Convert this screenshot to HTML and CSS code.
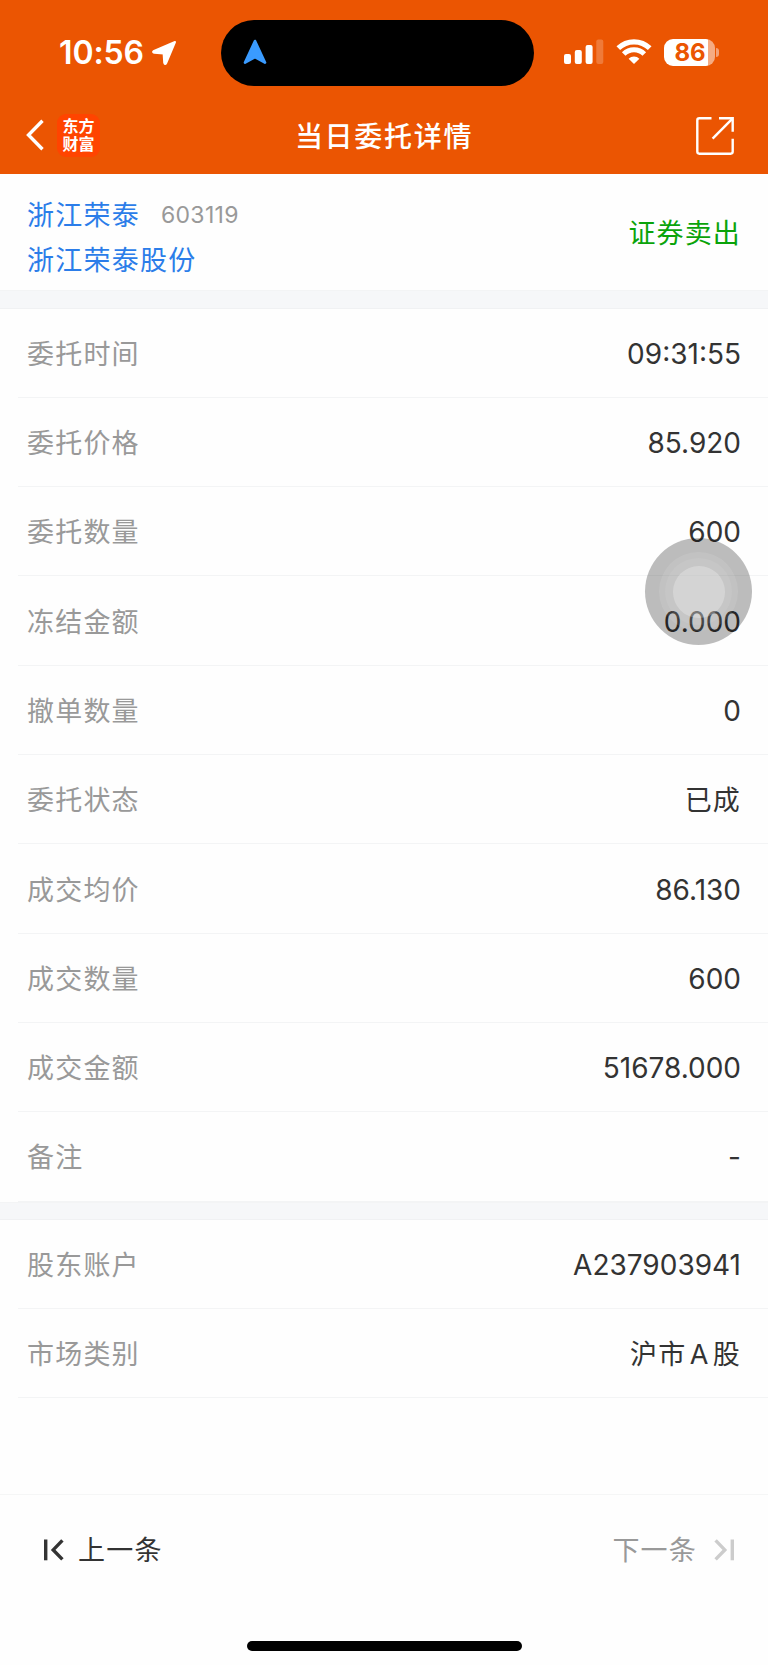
FILE: index.html
```html
<!DOCTYPE html>
<html lang="zh-CN">
<head>
    <meta charset="UTF-8">
    <meta name="viewport" content="width=device-width, initial-scale=1.0">
    <title>当日委托详情</title>
    <link rel="stylesheet" href="styles.css">
</head>
<body>
    <header class="header">
        <div class="status-bar">
            <div class="status-left">
                <span class="time">10:56</span>
                <svg class="location" width="26" height="26" viewBox="0 0 26 26">
                    <path d="M24 2 L15.2 23 Q14 25.2 13.2 22.6 L12.6 13.4 L3.2 12.8 Q1 12 3 10.8 Z" fill="#fff" stroke="#fff" stroke-width="2" stroke-linejoin="round"/>
                </svg>
            </div>
            <div class="island">
                <svg width="24" height="26" viewBox="0 0 24 26">
                    <path d="M12 2 L22 23.6 L12 18 L2 23.6 Z" fill="#3a9bff" stroke="#3a9bff" stroke-width="2.6" stroke-linejoin="round"/>
                </svg>
            </div>
            <div class="status-right">
                <svg class="signal" width="40" height="26" viewBox="0 0 40 26" fill="#fff">
                    <rect x="0" y="15" width="7" height="10" rx="2"/>
                    <rect x="10.8" y="11" width="7" height="14" rx="2"/>
                    <rect x="21.6" y="6" width="7" height="19" rx="2"/>
                    <rect x="32.3" y="0.5" width="7" height="24.5" rx="2" opacity="0.22"/>
                </svg>
                <svg class="wifi" width="36" height="26" viewBox="0 0 36 26" fill="none" stroke="#fff">
                    <path d="M2.3 9.2 A22.4 22.4 0 0 1 33.7 9.2" stroke-width="5.2"/>
                    <path d="M7.7 15 A14.4 14.4 0 0 1 28.3 15" stroke-width="5"/>
                    <path d="M18 25 L12.6 19.8 A7.6 7.6 0 0 1 23.4 19.8 Z" fill="#fff" stroke="none"/>
                </svg>
                <div class="battery"><span>86</span></div>
                <div class="battery-tip"></div>
            </div>
        </div>
        <nav class="nav">
            <div class="nav-left">
                <svg width="18" height="32" viewBox="0 0 18 32">
                    <path d="M16.5 1.8 L2.5 16 L16.5 30.2" fill="none" stroke="#fff" stroke-width="3.4"/>
                </svg>
                <div class="logo"><span>东方</span><span>财富</span></div>
            </div>
            <h1>当日委托详情</h1>
            <svg class="share" width="38" height="38" viewBox="0 0 38 38" fill="none" stroke="#fff" stroke-width="2.4">
                <path d="M15.5 1.3 H3.4 Q1.3 1.3 1.3 3.4 V34.6 Q1.3 36.7 3.4 36.7 H34.6 Q36.7 36.7 36.7 34.6 V21.7"/>
                <path d="M23 1.3 H36.7 V14.8"/>
                <path d="M36.2 1.8 L16.6 21.6"/>
            </svg>
        </nav>
    </header>

    <section class="stock">
        <div class="stock-info">
            <div class="stock-line"><span class="stock-name">浙江荣泰</span><span class="stock-code">603119</span></div>
            <div class="stock-line"><span class="stock-name">浙江荣泰股份</span></div>
        </div>
        <div class="side">证券卖出</div>
    </section>

    <div class="divider"></div>

    <section class="list">
        <div class="row"><span class="label">委托时间</span><span class="num">09:31:55</span></div>
        <div class="row"><span class="label">委托价格</span><span class="num">85.920</span></div>
        <div class="row"><span class="label">委托数量</span><span class="num">600</span></div>
        <div class="row"><span class="label">冻结金额</span><span class="num">0.000</span></div>
        <div class="row"><span class="label">撤单数量</span><span class="num">0</span></div>
        <div class="row"><span class="label">委托状态</span><span class="text">已成</span></div>
        <div class="row"><span class="label">成交均价</span><span class="num">86.130</span></div>
        <div class="row"><span class="label">成交数量</span><span class="num">600</span></div>
        <div class="row"><span class="label">成交金额</span><span class="num">51678.000</span></div>
        <div class="row"><span class="label">备注</span><span class="num">-</span></div>
    </section>

    <div class="divider"></div>

    <section class="list">
        <div class="row"><span class="label">股东账户</span><span class="num">A237903941</span></div>
        <div class="row"><span class="label">市场类别</span><span class="text">沪市<span class="wide">A</span>股</span></div>
    </section>

    <footer class="footer">
        <div class="pager">
            <div class="prev">
                <svg width="20" height="22" viewBox="0 0 20 22" fill="none" stroke="#333" stroke-width="3.4">
                    <path d="M1.7 0.5 V21.3"/>
                    <path d="M18.4 1.4 L9.2 10.9 L18.4 20.4"/>
                </svg>
                <span>上一条</span>
            </div>
            <div class="next">
                <span>下一条</span>
                <svg width="20" height="22" viewBox="0 0 20 22" fill="none" stroke="#ccc" stroke-width="3.4">
                    <path d="M18.3 0.5 V21.3"/>
                    <path d="M1.6 1.4 L10.8 10.9 L1.6 20.4"/>
                </svg>
            </div>
        </div>
        <div class="home-bar"></div>
    </footer>

    <!-- 悬浮按钮 -->
    <div class="touch">
        <div class="ring ring-1">
            <div class="ring ring-2">
                <div class="ring ring-3"></div>
            </div>
        </div>
    </div>
</body>
</html>
```

FILE: styles.css
```css
* {
    box-sizing: border-box;
}

body {
    position: relative;
    display: flex;
    flex-direction: column;
    height: 1665px;
    margin: 0;
    background-color: #fefefe;
    color: #333;
    font-family: 'Inter', 'Noto Sans CJK SC', sans-serif;
    font-size: 27px;
}

svg {
    display: block;
    flex-shrink: 0;
}

.header {
    height: 174.4px;
    background-color: #eb5502;
    color: #fff;
}

.status-bar {
    display: grid;
    grid-template-columns: 221px 313px 1fr;
    height: 86px;
    padding-top: 20px;
}

.status-left {
    display: flex;
    align-items: center;
    gap: 7px;
    padding-left: 59px;
}

.time {
    width: 85px;
    font-size: 32px;
    font-weight: 600;
    letter-spacing: -0.1px;
    line-height: 40px;
    white-space: nowrap;
}

.island {
    display: flex;
    align-items: center;
    height: 66px;
    padding: 0 0 2px 22px;
    border-radius: 33px;
    background-color: #000;
}

.status-right {
    display: flex;
    align-items: center;
    height: 64px;
    padding-left: 30px;
}

.wifi {
    margin-left: 12px;
}

.battery {
    width: 51px;
    height: 27px;
    margin-left: 12px;
    padding-left: 1px;
    border-radius: 9px;
    background: linear-gradient(to right, #fff 44px, #f5ab83 44px);
    color: #eb5502;
    font-size: 24px;
    font-weight: 700;
    line-height: 27px;
    text-align: center;
}

.battery-tip {
    width: 3px;
    height: 9px;
    margin-left: 1px;
    border-radius: 0 4px 4px 0;
    background-color: #f3a077;
}

.nav {
    display: grid;
    grid-template-columns: 1fr auto 1fr;
    align-items: center;
    height: 88.4px;
    padding: 12px 34px 0 26px;
}

.nav-left {
    display: flex;
    align-items: center;
    gap: 13px;
    margin-top: -2px;
}

.logo {
    display: flex;
    flex-direction: column;
    align-items: center;
    justify-content: center;
    width: 43px;
    height: 43px;
    border-radius: 9px;
    background-color: #ff4400;
    font-size: 16px;
    font-weight: 700;
    line-height: 18px;
}

.nav h1 {
    margin: 0 -8px 0 0;
    padding-top: 1px;
    font-size: 28px;
    font-weight: 500;
    letter-spacing: 1.7px;
    line-height: 40px;
}

.share {
    justify-self: end;
}

.stock {
    display: flex;
    align-items: center;
    justify-content: space-between;
    height: 116px;
    padding: 7px 27px 0 27px;
}

.stock-line {
    display: flex;
    align-items: center;
    height: 45px;
}

.stock-name {
    color: #2b7de9;
    letter-spacing: 1.25px;
}

.stock-code {
    margin-left: 21px;
    padding-top: 3px;
    color: #999;
    font-size: 23px;
    letter-spacing: 0.3px;
}

.side {
    padding-bottom: 9px;
    color: #0aa30a;
    letter-spacing: 1.15px;
}

.divider {
    height: 18.2px;
    border-top: 1px solid #f3f4f5;
    border-bottom: 1px solid #f0f1f3;
    background-color: #f6f7f9;
}

.list {
    padding-left: 18px;
}

.row {
    display: flex;
    align-items: center;
    justify-content: space-between;
    height: 89.3px;
    padding: 0 27px 0 9px;
    border-bottom: 1px solid #f3f4f5;
}

.label {
    padding-bottom: 1px;
    color: #999;
    letter-spacing: 1.2px;
}

.num {
    padding-top: 2px;
    font-size: 28px;
}

.text {
    padding-bottom: 1px;
    letter-spacing: 1.15px;
}

.wide {
    display: inline-block;
    width: 26.5px;
    text-align: center;
}

.footer {
    display: flex;
    flex-direction: column;
    align-items: center;
    justify-content: space-between;
    height: 171px;
    margin-top: auto;
    padding-bottom: 14px;
    border-top: 1px solid #f5f6f6;
}

.pager {
    display: flex;
    justify-content: space-between;
    width: 100%;
    padding: 34px 34px 0 44px;
}

.prev,
.next {
    display: flex;
    align-items: center;
    height: 41px;
    letter-spacing: 1.2px;
}

.prev span,
.next span {
    padding-bottom: 2px;
}

.prev {
    gap: 14px;
}

.next {
    gap: 17px;
    color: #999;
}

.home-bar {
    width: 275px;
    height: 10px;
    border-radius: 5px;
    background-color: #000;
}

.touch {
    position: absolute;
    top: 538px;
    left: 645px;
    display: flex;
    align-items: center;
    justify-content: center;
    width: 107px;
    height: 107px;
    border-radius: 50%;
    background-color: rgba(0, 0, 0, 0.26);
}

.ring {
    display: flex;
    align-items: center;
    justify-content: center;
    border-radius: 50%;
}

.ring-1 {
    width: 79px;
    height: 79px;
    background-color: rgba(255, 255, 255, 0.1);
}

.ring-2 {
    width: 67px;
    height: 67px;
    background-color: rgba(255, 255, 255, 0.07);
}

.ring-3 {
    width: 52px;
    height: 52px;
    background-color: rgba(255, 255, 255, 0.26);
}
```
